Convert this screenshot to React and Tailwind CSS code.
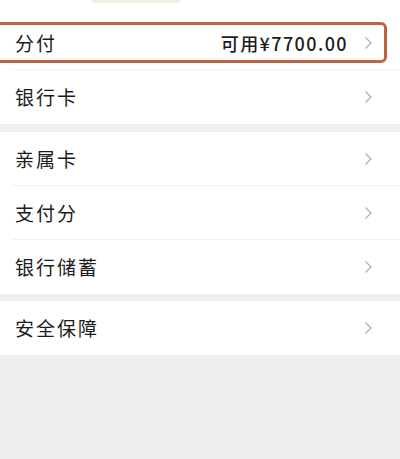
import { Fragment } from 'react';

const groups = [
  [
    { label: '分付', value: '可用¥7700.00' },
    { label: '银行卡' },
  ],
  [{ label: '亲属卡' }, { label: '支付分' }, { label: '银行储蓄' }],
  [{ label: '安全保障' }],
];

function Chevron() {
  return (
    <svg width="9" height="14" viewBox="0 0 9 14" className="shrink-0">
      <polyline points="1.5,1.5 7,7 1.5,12.5" fill="none" stroke="#b3b3b3" strokeWidth="1.4" />
    </svg>
  );
}

function Row({ label, value, last }) {
  return (
    <div className="relative flex h-[54px] items-center pl-[15px] pr-[27px]">
      <span className="text-[19px] tracking-[2px] text-[#1c1c1c]">{label}</span>
      <div className="ml-auto flex items-center gap-[16px]">
        {value && <span className="text-[18px] font-medium tracking-[1.4px] text-[#1c1c1c]">{value}</span>}
        <Chevron />
      </div>
      {!last && <div className="absolute bottom-0 left-[12px] right-0 h-px bg-[#f2f2f2]" />}
    </div>
  );
}

export default function App() {
  return (
    <div
      className="relative h-[459px] w-[400px] overflow-hidden bg-[#efefef]"
      style={{ fontFamily: '"Noto Sans CJK SC", "Noto Sans", sans-serif' }}
    >
      <div className="relative h-[16px] bg-white">
        <div className="absolute left-[92px] top-0 h-[3px] w-[88px] rounded-b-md bg-[#f7efe4]" />
      </div>
      {groups.map((rows, gi) => (
        <Fragment key={gi}>
          {gi > 0 && <div className={gi === 1 ? 'h-[8px]' : 'h-[7px]'} />}
          <div className="bg-white">
            {rows.map((r, i) => (
              <Row key={r.label} {...r} last={i === rows.length - 1} />
            ))}
          </div>
        </Fragment>
      ))}
      {/* highlight box over the first row */}
      <div className="absolute left-[-6px] top-[22px] h-[41px] w-[393px] rounded-[6px] border-[3px] border-[#c4603f]" />
    </div>
  );
}
